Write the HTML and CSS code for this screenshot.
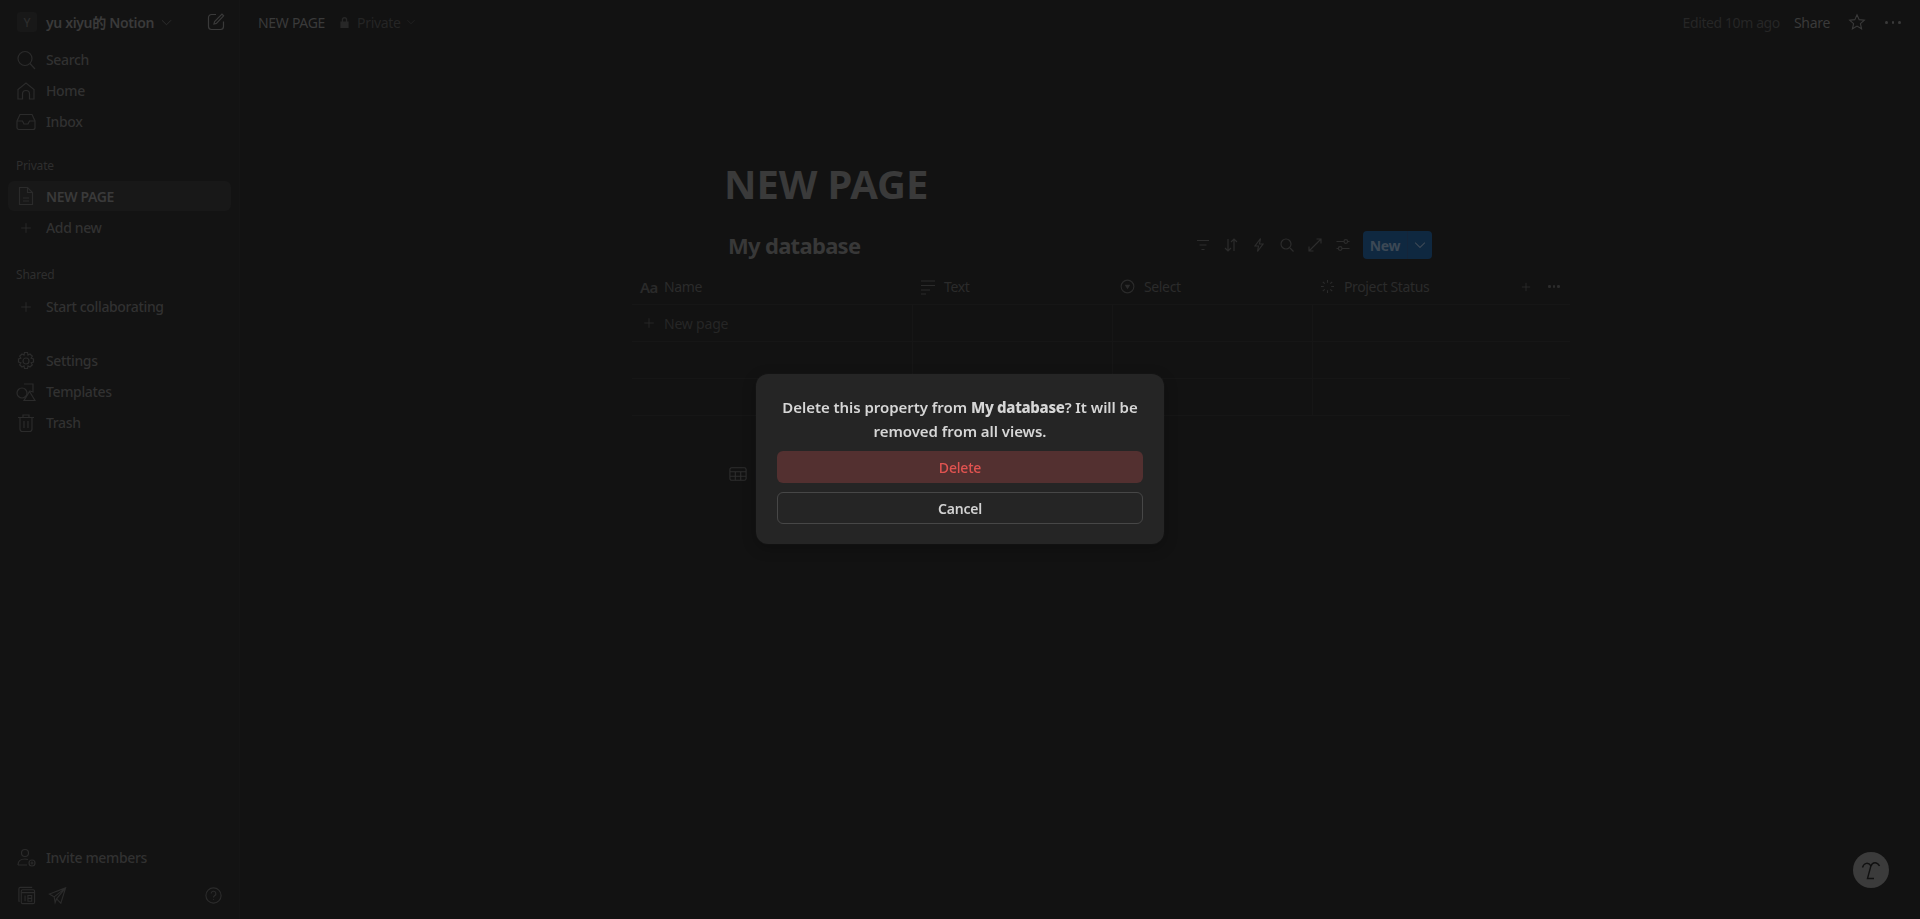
FILE: index.html
```html
<!DOCTYPE html>
<html lang="en">
<head>
<meta charset="utf-8">
<title>NEW PAGE</title>
<link rel="stylesheet" href="styles.css">
</head>
<body>
<svg class="defs" width="0" height="0" aria-hidden="true">
  <defs>
    <symbol id="i-plus" viewBox="0 0 20 20"><path d="M10 4v12M4 10h12"/></symbol>
    <symbol id="i-chev" viewBox="0 0 20 20"><path d="M3 6.500l7 7 7-7"/></symbol>
  </defs>
</svg>
<div class="app">
  <aside class="sidebar">
    <div class="workspace">
      <span class="avatar">Y</span>
      <span class="ws-name">yu xiyu的 Notion</span>
      <svg class="ws-chev ic" viewBox="0 0 20 20"><use href="#i-chev"/></svg>
      <svg class="compose ic" viewBox="0 0 18 18"><path d="M9 1.500H4.500a3 3 0 0 0-3 3v9a3 3 0 0 0 3 3h9a3 3 0 0 0 3-3V8.500"/><path d="M7 11l.6-2.400L15 1.200l1.600 1.600L9.400 10.400z"/></svg>
    </div>
    <nav class="group first">
      <a class="row"><svg class="ic" viewBox="0 0 20 20"><circle cx="9" cy="8.500" r="7"/><path d="M14 13.500l5 5.500"/></svg><span>Search</span></a>
      <a class="row"><svg class="ic" viewBox="0 0 20 20"><path d="M2 18V8.500L10 2l8 6.500V18h-4.500v-5a3.500 3.500 0 0 0-7 0v5z"/></svg><span>Home</span></a>
      <a class="row"><svg class="ic" viewBox="0 0 20 20"><path d="M1 9l3-6.500h12L19 9v6.500a2 2 0 0 1-2 2H3a2 2 0 0 1-2-2z"/><path d="M1 9h5.500l1.500 3h4l1.500-3H19"/></svg><span>Inbox</span></a>
    </nav>
    <div class="label">Private</div>
    <nav class="group">
      <a class="row active"><svg class="ic" viewBox="0 0 20 20"><path d="M3.500 1.500h8l5 5V18.500h-13z"/><path d="M11.500 1.500v5h5M7 12h6M7 15h6"/></svg><span class="strong">NEW PAGE</span></a>
      <a class="row"><svg class="ic small" viewBox="0 0 20 20"><use href="#i-plus"/></svg><span>Add new</span></a>
    </nav>
    <div class="label shared">Shared</div>
    <nav class="group">
      <a class="row"><svg class="ic small" viewBox="0 0 20 20"><use href="#i-plus"/></svg><span>Start collaborating</span></a>
    </nav>
    <nav class="group tools">
      <a class="row"><svg class="ic" viewBox="0 0 20 20"><circle cx="10" cy="10" r="3"/><path d="M8.500 1.500h3l.5 2.500 2-1 2.300 2.200-1.200 2 2.400.8v3l-2.400.8 1.200 2L14 16l-2-1-.5 2.500h-3L8 15l-2 1-2.300-2.200 1.200-2-2.400-.8v-3l2.400-.8-1.200-2L6 3l2 1z"/></svg><span>Settings</span></a>
      <a class="row"><svg class="ic" viewBox="0 0 20 20"><circle cx="6" cy="11" r="5"/><path d="M8 2h9v8l-3-1"/><path d="M13.500 9.500L19 18.500H8z"/></svg><span>Templates</span></a>
      <a class="row"><svg class="ic" viewBox="0 0 20 20"><path d="M2 4.500h16M7 4.500V2h6v2.500M4 4.500V16a2.500 2.500 0 0 0 2.500 2.500h7A2.500 2.500 0 0 0 16 16V4.500M8 8v7M12 8v7"/></svg><span>Trash</span></a>
    </nav>
    <div class="side-foot">
      <a class="row"><svg class="ic" viewBox="0 0 20 20"><circle cx="9" cy="5" r="3.500"/><path d="M2 17c0-4 3-6 7-6 1 0 2 .2 3 .5M2 17h9"/><circle cx="16" cy="15" r="3"/><path d="M14.500 15h3M16 13.500v3"/></svg><span>Invite members</span></a>
      <div class="foot-icons">
        <svg class="ic" viewBox="0 0 20 20"><path d="M3 16H2V3a1.500 1.500 0 0 1 1.500-1.500H16"/><rect x="4.500" y="4" width="14" height="14.500" rx="1.500"/><path d="M4.500 7h14M8.500 10v6M11.500 10h4v6h-4zM11.500 13h4"/></svg>
        <svg class="ic" viewBox="0 0 20 20"><path d="M18.500 2L1.500 8.500l5 3L18.500 2 9 13.500l4.500 4.500zM6.500 11.500l1 6 1.500-4"/></svg>
        <svg class="ic help" viewBox="0 0 20 20"><circle cx="10" cy="10" r="8"/><path d="M7.500 8a2.500 2.500 0 1 1 3.700 2.200c-.8.500-1.200 1-1.200 1.800M10 13.800v.8"/></svg>
      </div>
    </div>
  </aside>
  <main class="main">
    <header class="topbar">
      <span class="crumb">NEW PAGE</span>
      <svg class="lock" viewBox="0 0 12 14"><path d="M3 6V4a3 3 0 0 1 6 0v2h1.500v7h-9V6zM4.500 6h3V4a1.500 1.500 0 0 0-3 0z"/></svg>
      <span class="privacy">Private</span>
      <svg class="ic privacy-chev" viewBox="0 0 20 20"><use href="#i-chev"/></svg>
      <span class="edited">Edited 10m ago</span>
      <span class="share">Share</span>
      <svg class="ic star" viewBox="0 0 20 20"><path d="M10 2l2.400 5.400 5.800.6-4.400 3.900 1.300 5.700-5.100-3-5.100 3 1.300-5.700L1.800 8l5.800-.6z"/></svg>
      <span class="dots"><i></i><i></i><i></i></span>
    </header>
    <div class="page">
      <h1 class="title">NEW PAGE</h1>
      <div class="db-head">
        <h2 class="db-title">My database</h2>
        <div class="db-tools">
          <svg class="ic" viewBox="0 0 16 16"><path d="M2 3.500h12M4.500 8h7M6.500 12.500h3"/></svg>
          <svg class="ic" viewBox="0 0 16 16"><path d="M5 2v12M2 11l3 3 3-3M11 14V2M8 5l3-3 3 3"/></svg>
          <svg class="ic" viewBox="0 0 16 16"><path d="M9.500 1.500L4 9h3.500l-1 5.500L12 7H8.500z"/></svg>
          <svg class="ic" viewBox="0 0 16 16"><circle cx="7" cy="7" r="5"/><path d="M11 11l3.500 3.500"/></svg>
          <svg class="ic" viewBox="0 0 16 16"><path d="M9.500 2H14v4.500M14 2L2 14M2 9.500V14h4.500"/></svg>
          <svg class="ic" viewBox="0 0 16 16"><path d="M1.500 4.500h7.500M12.500 4.500h2M1.500 11.500h2M7 11.500h7.500"/><circle cx="10.800" cy="4.500" r="1.800"/><circle cx="5.200" cy="11.500" r="1.800"/></svg>
          <div class="new-btn"><span class="new-label">New</span><span class="new-arrow"><svg class="ic" viewBox="0 0 20 20"><use href="#i-chev"/></svg></span></div>
        </div>
      </div>
      <div class="table">
        <div class="thead">
          <div class="th"><span class="aa">Aa</span><span>Name</span></div>
          <div class="th"><svg class="ic wide" viewBox="0 0 16 16"><path d="M1 2h14M1 6.500h14M1 11h9M1 15h5"/></svg><span>Text</span></div>
          <div class="th"><svg class="ic" viewBox="0 0 16 16"><circle cx="8" cy="8" r="6.800"/><path class="fill" d="M5 6h6l-3 5z"/></svg><span>Select</span></div>
          <div class="th last"><svg class="ic" viewBox="0 0 16 16"><path d="M8 1v3M8 12v3M1 8h3M12 8h3M3 3l2 2M11 11l2 2M13 3l-2 2M5 11l-2 2"/></svg><span>Project Status</span><svg class="ic small add" viewBox="0 0 20 20"><use href="#i-plus"/></svg><span class="dots mini"><i></i><i></i><i></i></span></div>
        </div>
        <div class="tr">
          <div class="td newpage"><svg class="ic small" viewBox="0 0 20 20"><use href="#i-plus"/></svg><span>New page</span></div>
          <div class="td"></div><div class="td"></div><div class="td"></div>
        </div>
        <div class="tr"><div class="td"></div><div class="td"></div><div class="td"></div><div class="td"></div></div>
        <div class="tr"><div class="td"></div><div class="td"></div><div class="td"></div><div class="td"></div></div>
      </div>
      <div class="view-row">
        <svg class="ic" viewBox="0 0 20 16"><rect x="1" y="1" width="18" height="14" rx="2"/><path d="M1 5.500h18M1 10.500h18M7 5.500V15M13 5.500V15"/></svg>
        <span>Default view</span>
      </div>
    </div>
  </main>
</div>
<div class="bubble"><svg viewBox="0 0 24 24"><path d="M3.500 9.500C5 4.500 9.500 4 12 8c1.500-4 6-4.500 8.500 0M12 7.500L8.500 20.500H15M9 11h.01M15.500 10.500h.01"/></svg></div>
<div class="overlay">
  <div class="modal" role="dialog">
    <p class="msg">Delete this property from <b>My database</b>? It will be<br>removed from all views.</p>
    <button class="btn danger">Delete</button>
    <button class="btn cancel">Cancel</button>
  </div>
</div>
</body>
</html>
```
FILE: styles.css
```css
* { box-sizing: border-box; }
html, body { margin: 0; height: 100%; }
body {
  background: #121212;
  color: #3a3a3a;
  font-family: "Noto Sans", "Noto Sans CJK SC", sans-serif;
  font-size: 14px;
  overflow: hidden;
}
.defs { position: absolute; }
.ic { width: 20px; height: 20px; fill: none; stroke: currentColor; stroke-width: 1.2; flex: none; }
.ic.small { width: 16px; height: 16px; }
.app { display: flex; height: 919px; }

.sidebar {
  width: 240px; flex: none; display: flex; flex-direction: column;
  background: #131313; border-right: 1px solid #151515;
  padding: 0 8px; color: #313131;
}
.workspace { display: flex; align-items: center; height: 44px; padding-left: 9px; color: #3a3a3a; }
.avatar {
  width: 20px; height: 20px; border-radius: 3px; background: #181818; color: #2c2c2c;
  display: flex; align-items: center; justify-content: center; font-size: 12px; font-weight: 500;
}
.ws-name { margin-left: 9px; font-weight: 600; font-size: 14px; letter-spacing: -.35px; white-space: nowrap; }
.ws-chev { width: 13px; height: 13px; margin-left: 6px; color: #333; }
.compose { width: 18px; height: 18px; margin-left: 34px; color: #3a3a3a; }
.group { display: flex; flex-direction: column; gap: 0; }
.row { display: flex; align-items: center; height: 31px; padding-left: 8px; gap: 10px; border-radius: 6px; font-weight: 500; letter-spacing: -.36px; white-space: nowrap; }
.row .ic { color: #2b2b2b; }
.row .ic.small { width: 16px; height: 16px; margin: 0 2px; }
.row.active { background: #181818; height: 30px; margin-bottom: 1px; }
.row .strong { font-weight: 600; color: #3a3a3a; }
.label { font-size: 12px; color: #2e2e2e; padding-left: 8px; height: 16px; line-height: 16px; margin-top: 21px; margin-bottom: 7px; letter-spacing: -.2px; }
.label.shared { margin-top: 24px; margin-bottom: 8px; }
.group.tools { margin-top: 23px; }
.side-foot { margin-top: auto; padding-bottom: 4px; }
.foot-icons { display: flex; align-items: center; gap: 12px; height: 40px; margin-top: 2px; padding-left: 9px; }
.foot-icons .ic { width: 19px; height: 19px; color: #2b2b2b; }
.foot-icons .help { margin-left: auto; margin-right: 8px; }

.main { flex: 1; display: flex; flex-direction: column; min-width: 0; }
.topbar { display: flex; align-items: center; height: 44px; padding: 0 19px 0 18px; }
.crumb { color: #3a3a3a; letter-spacing: -.3px; }
.lock { width: 11px; height: 13px; margin-left: 14px; fill: #272727; }
.privacy { margin-left: 7px; color: #252525; letter-spacing: -.35px; }
.privacy-chev { width: 10px; height: 10px; margin-left: 6px; color: #2a2a2a; }
.edited { margin-left: auto; color: #262626; letter-spacing: -.4px; }
.share { margin-left: 14px; color: #3a3a3a; letter-spacing: -.3px; }
.star { width: 18px; height: 18px; margin-left: 18px; color: #3a3a3a; }
.dots { display: inline-flex; gap: 4px; margin-left: 19px; width: 16px; }
.dots i { width: 3px; height: 3px; border-radius: 50%; background: #3a3a3a; }
.dots.mini { margin-left: 4px; gap: 2px; justify-content: center; }
.dots.mini i { width: 2.500px; height: 2.500px; background: #2c2c2c; }

.page { display: flex; flex-direction: column; padding-left: 392px; flex: 1; }
.title { margin: 112px 0 0 92px; font-size: 40px; line-height: 56px; font-weight: 700; color: #3a3a3a; letter-spacing: -.1px; white-space: nowrap; }
.db-head { display: flex; align-items: center; justify-content: space-between; margin: 17px 0 0 96px; width: 704px; height: 32px; }
.db-title { margin: 0; font-size: 22px; font-weight: 700; color: #383838; letter-spacing: -.7px; }
.db-tools { display: flex; align-items: center; gap: 12px; color: #2c2c2c; }
.db-tools > .ic { width: 16px; height: 16px; }
.new-btn { display: flex; width: 69px; height: 28px; background: #0f2840; border-radius: 4px; color: #3c4855; font-weight: 700; font-size: 14px; }
.new-label { width: 45px; display: flex; align-items: center; justify-content: center; border-right: 1px solid #14253a; letter-spacing: -.3px; }
.new-arrow { flex: 1; display: flex; align-items: center; justify-content: center; }
.new-arrow .ic { width: 14px; height: 14px; stroke-width: 1.500; }

.table { margin-top: 8px; width: 938px; }
.thead, .tr { display: grid; grid-template-columns: 280px 200px 200px 258px; }
.thead { height: 36px; border-bottom: 1px solid #161616; }
.tr { height: 37px; border-bottom: 1px solid #161616; }
.th { display: flex; align-items: center; padding-left: 8px; gap: 9px; color: #2b2b2b; letter-spacing: -.36px; white-space: nowrap; }
.th .ic { width: 15px; height: 15px; color: #2b2b2b; }
.th .ic.wide { width: 16px; height: 16px; margin-right: -1px; }
.th .fill { fill: currentColor; stroke: none; }
.aa { font-size: 15px; font-weight: 600; color: #2a2a2a; width: 15px; letter-spacing: -.5px; }
.th.last { padding-right: 8px; }
.th.last .add { margin-left: auto; width: 14px; height: 14px; }
.td { border-left: 1px solid #161616; }
.td:first-child { border-left: 0; }
.newpage { display: flex; align-items: center; gap: 7px; padding-left: 9px; color: #262626; letter-spacing: -.2px; }
.newpage .ic { color: #262626; }
.view-row { display: flex; align-items: center; gap: 8px; margin: 48px 0 0 97px; color: #2c2c2c; height: 20px; }
.view-row .ic { width: 18px; height: 16px; color: #2e2e2e; }

.bubble { position: absolute; left: 1853px; top: 852px; width: 36px; height: 36px; border-radius: 50%; background: #3b3b3b; display: flex; align-items: center; justify-content: center; }
.bubble svg { width: 24px; height: 24px; fill: none; stroke: #111; stroke-width: 1.400; }

.overlay { position: fixed; inset: 0; display: flex; align-items: center; justify-content: center; padding-bottom: 1px; }
.modal {
  width: 408px; height: 170px; background: #252525; border-radius: 12px; padding: 21px 21px 20px;
  display: flex; flex-direction: column; align-items: stretch; box-shadow: 0 0 0 1px rgba(255,255,255,.01), 0 4px 14px rgba(0,0,0,.25);
}
.msg { margin: 0 0 8px; text-align: center; font-size: 15px; line-height: 24px; font-weight: 600; color: #d6d6d6; letter-spacing: -.05px; white-space: nowrap; }
.msg b { font-weight: 800; letter-spacing: -.3px; }
.btn { height: 32px; border-radius: 6px; font: inherit; font-size: 14px; font-weight: 500; border: 0; letter-spacing: -.2px; }
.btn.danger { background: #533030; color: #e05350; }
.btn.cancel { margin-top: 9px; background: transparent; border: 1px solid #474747; color: #d2d2d2; font-weight: 600; }
```
